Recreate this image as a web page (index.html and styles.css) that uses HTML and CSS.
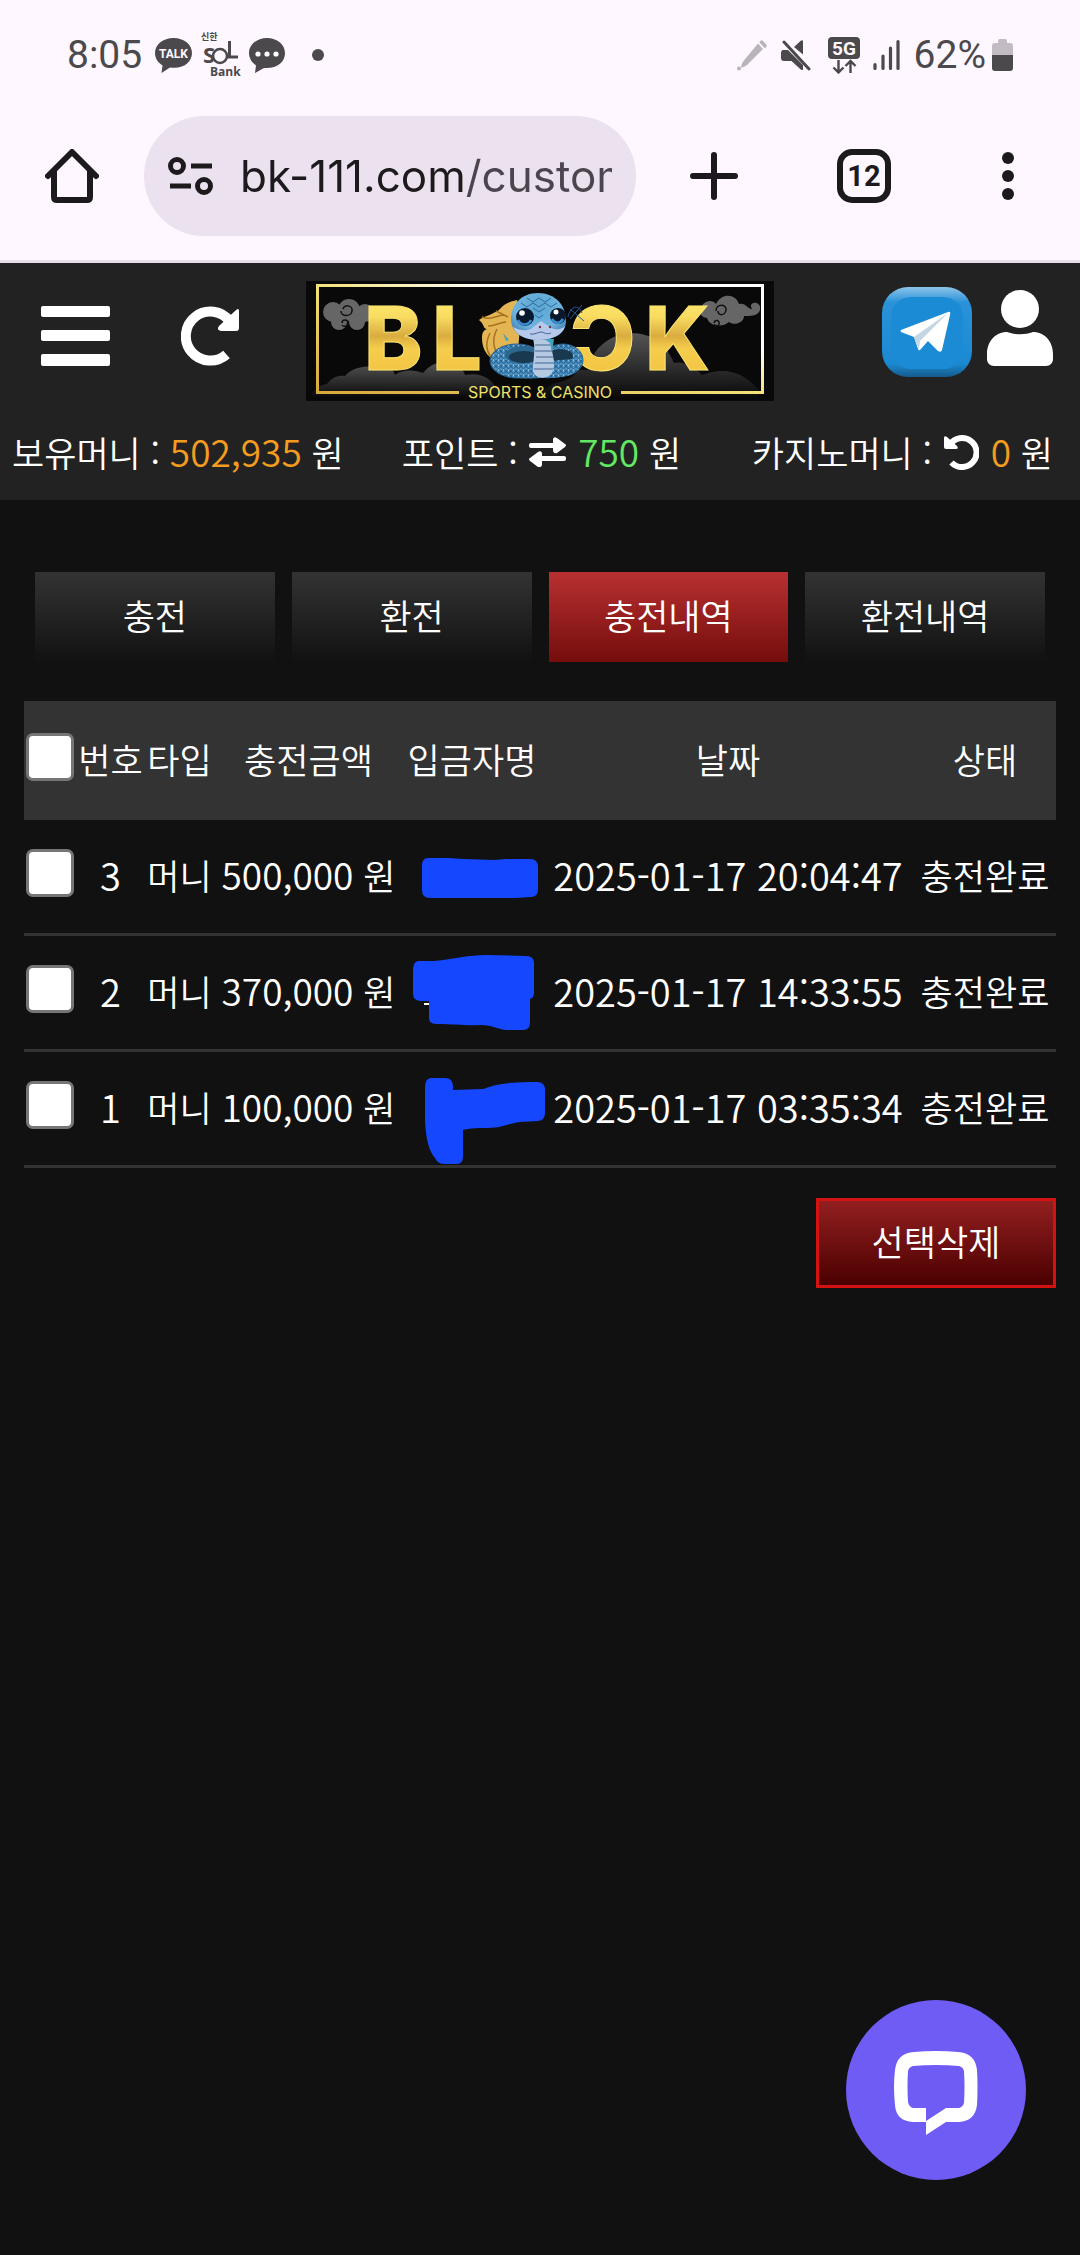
FILE: index.html
```html
<!DOCTYPE html>
<html lang="ko">
<head>
<meta charset="utf-8">
<meta name="viewport" content="width=device-width, initial-scale=1">
<title>충전내역</title>
<link rel="stylesheet" href="styles.css">
</head>
<body>
<div class="chrome">
  <div class="status">
    <div class="status-left">
      <span class="clock">8:05</span>
      <svg class="s-talk" width="37" height="36" viewBox="0 0 37 36"><path fill="#4b494c" d="M18.500 1C8 1 0 7.500 0 16c0 5.500 3 9.500 7.500 12.500L6.500 36l8.500-5.500c14 2 22-6 22-14.500C37 7.500 29 1 18.500 1z"/><text x="18.500" y="21" text-anchor="middle" class="talk-text">TALK</text></svg>
      <svg class="s-sol" width="40" height="50" viewBox="0 0 40 50" fill="#4b494c"><text x="0" y="10" class="sol-top">신한</text><text x="2" y="33" class="sol-s">S</text><circle cx="19" cy="26" r="7" fill="none" stroke="#4b494c" stroke-width="2.500"/><path d="M28.500 11v16H37" fill="none" stroke="#4b494c" stroke-width="3"/><text x="9" y="46" class="sol-bank">Bank</text></svg>
      <svg class="s-msg" width="36" height="36" viewBox="0 0 36 36"><path fill="#4b494c" d="M18 1C8 1 0 7.500 0 16c0 5.500 3 9.500 7 12.500L6 36l9-5c13 1 21-6 21-15C36 7.500 28 1 18 1z"/><g fill="#fff"><circle cx="9" cy="17" r="2.600"/><circle cx="18" cy="17" r="2.600"/><circle cx="27" cy="17" r="2.600"/></g></svg>
      <svg class="s-dot" width="12" height="12" viewBox="0 0 12 12"><circle cx="6" cy="6" r="6" fill="#4b494c"/></svg>
    </div>
    <div class="status-right">
      <svg width="30" height="32" viewBox="0 0 30 32" fill="#b9b3ba"><path d="M21 4.500l5 5.500L10 26c-2 1.800-4 2-6 2.500.3-2 .7-4 2.500-6.500zM23 2.500c1-1.500 2-1.500 3-.5l3 3c1 1 1 2 0 3.500L27.500 9 22.500 3.500z"/><circle cx="2" cy="29.500" r="2"/></svg>
      <svg class="s-mute" width="30" height="32" viewBox="0 0 30 32" fill="#4b494c"><path d="M2 11h5l15 15v5l-2-.2L10.500 22H3c-2 0-3-1-3-3v-5c0-2 1-3 2-3zM13 8l7-6.500h2v14z"/><path d="M3 3l25 27" stroke="#4b494c" stroke-width="3" stroke-linecap="round"/></svg>
      <svg class="s-5g" width="32" height="38" viewBox="0 0 32 38"><rect width="32" height="22" y="1" rx="4" fill="#4b494c"/><text x="16" y="19" text-anchor="middle" class="g5">5G</text><path d="M10.500 24v12M5.500 31.500l5 5 5-5M22.500 37V25M17.500 30l5-5 5 5" fill="none" stroke="#4b494c" stroke-width="2.400"/></svg>
      <svg class="s-sig" width="27" height="32" viewBox="0 0 27 32"><path d="M2 25.500v4M10 17v12.500M17.500 9v20.500M25 2.500v27" stroke="#4b494c" stroke-width="3.200" stroke-linecap="round"/></svg>
      <span class="clock s-bat-text">62%</span>
      <svg width="21" height="32" viewBox="0 0 21 32"><path d="M6 2q0-2 2-2h5q2 0 2 2v2h3q3 0 3 3v9H0V7q0-3 3-3h3z" fill="#c2bbc3"/><path d="M0 16h21v13q0 3-3 3H3q-3 0-3-3z" fill="#4b494c"/></svg>
    </div>
  </div>
  <div class="toolbar">
    <button class="tool home" aria-label="홈"><svg width="54" height="54" viewBox="0 0 54 54" fill="none" stroke="#1c1a1d" stroke-width="6" stroke-linejoin="round" stroke-linecap="round"><path d="M9 23v25q0 3 3 3h30q3 0 3-3V23"/><path d="M3 27L27 3l24 24"/></svg></button>
    <div class="omnibox">
      <svg width="46" height="40" viewBox="0 0 46 40" fill="none" stroke="#1c1a1d" stroke-width="5"><circle cx="9" cy="10" r="6.500"/><path d="M23 10h21M2 30h21"/><circle cx="36" cy="30" r="6.500"/></svg>
      <input class="url" type="text" value="bk-111.com/custom" aria-label="주소" readonly>
    </div>
    <button class="tool plus" aria-label="새 탭"><svg width="48" height="48" viewBox="0 0 48 48"><path d="M24 3v42M3 24h42" stroke="#1c1a1d" stroke-width="6" stroke-linecap="round"/></svg></button>
    <button class="tool" aria-label="탭 12개"><span class="tabcount">12</span></button>
    <button class="tool" aria-label="메뉴"><svg width="12" height="48" viewBox="0 0 12 48" fill="#1c1a1d"><circle cx="6" cy="6" r="6"/><circle cx="6" cy="24" r="6"/><circle cx="6" cy="42" r="6"/></svg></button>
  </div>
</div>

<header class="site-head">
  <div class="brand-row">
    <div class="head-left">
      <button class="icon-btn" aria-label="메뉴 열기"><svg width="69" height="60" viewBox="0 0 69 60" fill="#fff"><rect width="69" height="11" rx="2"/><rect y="24" width="69" height="11" rx="2"/><rect y="48" width="69" height="12" rx="2"/></svg></button>
      <button class="icon-btn" aria-label="새로고침"><svg width="59" height="60" viewBox="0 0 59 60"><path d="M45.500 48.500A24.500 24.500 0 1 1 49 15.500" fill="none" stroke="#fff" stroke-width="10"/><path d="M54 5q4-4 4 0v17q0 3-3 3H40q-5-1-2-5z" fill="#fff"/></svg></button>
    </div>
    <a class="logo" href="#" aria-label="BLOOK">
      <svg width="468" height="120" viewBox="0 0 468 120">
        <defs>
          <linearGradient id="gold" x1="0" y1="0" x2="0" y2="1"><stop offset="0" stop-color="#fff17a"/><stop offset=".3" stop-color="#f9dc60"/><stop offset=".48" stop-color="#d9ac3f"/><stop offset=".6" stop-color="#f5cd4c"/><stop offset="1" stop-color="#f2bd3e"/></linearGradient>
          <linearGradient id="frame" x1="0" y1="1" x2="1" y2="0"><stop offset="0" stop-color="#d9a83c"/><stop offset=".5" stop-color="#f4e27a"/><stop offset=".7" stop-color="#fff"/><stop offset="1" stop-color="#fff"/></linearGradient>
          <linearGradient id="hill" x1="0" y1="0" x2="0" y2="1"><stop offset="0" stop-color="#555"/><stop offset="1" stop-color="#0b0b0b"/></linearGradient>
          <radialGradient id="skin" cx=".5" cy=".3" r=".75"><stop offset="0" stop-color="#5ba6d3"/><stop offset=".6" stop-color="#6fb4de"/><stop offset="1" stop-color="#2b6fa3"/></radialGradient>
          <pattern id="scales" width="5" height="5" patternUnits="userSpaceOnUse"><rect width="5" height="5" fill="#4c94c6"/><path d="M0 0q2.500 5 5 0M-2.500 3q2.500 4 5 0M2.500 3q2.500 4 5 0" fill="none" stroke="#1f557f" stroke-width=".9"/><circle cx="2.500" cy="4" r=".8" fill="#b5def5"/></pattern>
        </defs>
        <rect width="468" height="120" fill="#090909"/>
        <path fill="url(#hill)" d="M4 116c5-9 10-12 17-13 6-8 13-9 18-8 6-8 22-12 32-8 10-5 16 0 18 7 8-6 20-5 28-2 8-10 20-14 28-8 8 0 12 4 14 10 14-3 26 2 32 14 6 6 8 6 10 8z"/>
        <path fill="url(#hill)" d="M230 116c8-8 14-12 20-14 8-2 14-4 18-8 4-5 6-6 14-5 2-18 20-36 42-37 24 0 36 12 44 30 5-1 12-1 16 6 8 0 10 4 12 6 26-10 44 0 56 14v8z"/>
        <g fill="#666"><circle cx="27" cy="31" r="10"/><circle cx="43" cy="29" r="11"/><circle cx="59" cy="32" r="9"/><circle cx="33" cy="41" r="8"/><circle cx="51" cy="41" r="8"/><path d="M395 29c0-8 10-12 15-6 6-12 20-10 23 0 6-2 9 5 13 5-5-8 10-9 8 1-2 7-12 6-16 6 0 7-10 10-15 6-7 6-20 4-22-4-8-1-6-6-6-8z"/></g>
        <path d="M37 28c1-5 10-4 9 2s-11 6-11 0M36 42c0-4 6-4 6 0s-5 4-6 2M410 30c0-8 11-7 10-1s-8 6-8 1M408 42c1-4 6-3 5 1s-5 2-4 0" fill="none" stroke="#111" stroke-width="1.500"/>
        <path d="M153 111.500H11.500V4.500h445v107H315" fill="none" stroke="url(#frame)" stroke-width="3"/>
        <g class="logo-word" fill="url(#gold)" stroke="#f9e471"><text x="58" y="89">B</text><text x="126" y="89">L</text><text x="264" y="89">Ɔ</text><text x="339" y="89">K</text></g>
        <path d="M173 39c4-3 14-6 20-10 6-7 10-8 18-10l4 12-3 40-16 10c-14-2-20-12-20-24 0-6 2-8 5-9-4 0-2-4-8-9z" fill="#e4b653"/>
        <path d="M184 52c-6 12-3 20 4 28M191 48c-5 10-4 20 3 28M176 36c10 4 14-2 22-2M182 45c8 0 12-4 18-4M190 30l12 6" stroke="#a67220" stroke-width="1.500" fill="none"/>
        <ellipse cx="211" cy="80" rx="27" ry="17" fill="url(#scales)" stroke="#255c88"/><ellipse cx="257" cy="79" rx="20" ry="16" fill="url(#scales)" stroke="#255c88"/>
        <ellipse cx="218" cy="74" rx="19" ry="9" fill="#2b668f"/><ellipse cx="218" cy="76" rx="15" ry="6" fill="#18394f"/><ellipse cx="254" cy="75" rx="13" ry="7" fill="#18394f"/>
        <path d="M185 78c14 12 34 4 47 2l12 0c14-2 26 0 32-6 4 20-20 24-40 23-26 2-50-2-51-19z" fill="url(#scales)"/>
        <path d="M225 52h20c-3 14 6 25 2 38-4 10-20 8-20-1 0-12 4-24-2-37z" fill="#b5c9e2"/><path d="M229 64h15M229 70h17M230 76h17M229 82h19M228 88h19" stroke="#6987ad" stroke-width="1.500"/>
        <path d="M200 60l-3-8 6 7zM238 58l6 4 2 10 2-14z" fill="#42a2bf"/>
        <path d="M232 12c17 0 28 12 28 28 0 13-12 19-28 19s-27-8-27-21c0-15 11-26 27-26z" fill="url(#skin)"/>
        <path d="M207 46c8 4 12 4 18 2l10-8 10 7c5 2 10 2 14-2-2 9-14 14-27 14-12 0-22-5-25-13z" fill="#b6c9ea"/>
        <path d="M221 17l6 4 6-4 6 4 6-4M215 22l6 4 6-4 6 4 6-4 6 4 6-4M227 27l6 4 6-4M229 34l4 3 4-3" stroke="#2c6e9c" fill="none"/>
        <g><circle cx="219" cy="36" r="9" fill="#0a1a2e"/><circle cx="252" cy="35" r="8" fill="#0a1a2e"/><path d="M212 39c3 6 10 6 13 0M246 38c3 5 8 5 11 0" stroke="#3a8dd0" stroke-width="2.500" fill="none"/><circle cx="216" cy="32" r="2.800" fill="#fff"/><circle cx="250" cy="31" r="2.500" fill="#fff"/></g>
        <path d="M224 53c5 1 8-2 11-2s5 3 10 1" stroke="#49648a" fill="none"/><g fill="#782e42"><circle cx="234" cy="46" r="1.200"/><circle cx="244" cy="46" r="1.200"/></g>
        <path d="M262 36c2-10 10-14 14-4M264 28l14 12M276 24l-12 14" stroke="#225b9c" fill="none"/>
        <text x="234" y="117" text-anchor="middle" class="logo-sub">SPORTS &amp; CASINO</text>
      </svg>
    </a>
    <div class="head-right">
      <a class="icon-btn" href="#" aria-label="텔레그램"><svg width="90" height="90" viewBox="0 0 90 90">
        <defs><linearGradient id="tg" x1="0" y1="0" x2="0" y2="1"><stop offset="0" stop-color="#8cc4ea"/><stop offset=".17" stop-color="#2a92d8"/><stop offset=".85" stop-color="#1b8ad3"/><stop offset="1" stop-color="#155b8b"/></linearGradient></defs>
        <rect width="90" height="90" rx="26" fill="url(#tg)"/><rect x="9" y="10" width="72" height="72" rx="20" fill="#1c8bd5"/><path d="M19 43L66 25q3-1 2 3l-8 35q-1 3-4 1L46 54l-8 9q-1 1-2-1l-4-12-13-5q-1-1 0-2z" fill="#fff"/><path d="M32 50l34-24-28 28-1 8-5-12z" fill="#c4d5e4"/></svg></a>
      <a class="icon-btn user" href="#" aria-label="내 정보"><svg width="66" height="76" viewBox="0 0 66 76" fill="#fff"><circle cx="33" cy="19" r="19"/><path d="M20 42c8 3 18 3 26 0 12 0 20 10 20 22v5c0 4-3 7-7 7H7c-4 0-7-3-7-7v-5c0-12 8-22 20-22z"/></svg></a>
    </div>
  </div>
  <div class="money-row">
    <div>보유머니 : <span class="num orange">502,935</span> 원</div>
    <div>포인트 : <svg class="swap" width="37" height="30" viewBox="0 0 37 30" fill="#fff"><path d="M2 6h22V2q1-3 4-1l8 6q2 1 0 3l-8 6q-3 1-4-2v-3H2q-2 0-2-2V8q0-2 2-2zM35 19H13v-3q-1-3-4-1l-8 6q-2 1 0 3l8 6q3 1 4-2v-4h22q2 0 2-2v-1q0-2-2-2z"/></svg> <span class="num green">750</span> 원</div>
    <div>카지노머니 : <svg class="undo" width="35" height="36" viewBox="0 0 35 36"><path d="M7.500 28.500A14.500 14.500 0 1 0 6 10.500" fill="none" stroke="#fff" stroke-width="6"/><path d="M0 4q0-3 3-1l10 9q2 3-1 3H2q-2 0-2-2z" fill="#fff"/></svg> <span class="num orange">0</span> 원</div>
  </div>
</header>

<main class="content">
  <nav class="tabs">
    <a class="tab" href="#">충전</a>
    <a class="tab" href="#">환전</a>
    <a class="tab active" href="#" aria-current="page">충전내역</a>
    <a class="tab" href="#">환전내역</a>
  </nav>
  <table class="history">
    <colgroup><col class="c-check"><col class="c-no"><col class="c-type"><col class="c-amount"><col class="c-name"><col><col class="c-state"></colgroup>
    <thead>
      <tr><th><input type="checkbox" aria-label="전체 선택"></th><th>번호</th><th>타입</th><th>충전금액</th><th>입금자명</th><th>날짜</th><th>상태</th></tr>
    </thead>
    <tbody>
      <tr><td><input type="checkbox" aria-label="3번 선택"></td><td class="date">3</td><td>머니</td><td><span class="num">500,000</span> 원</td>
        <td class="name"><svg width="140" height="113" viewBox="0 0 140 113"><path fill="#1547ff" d="M26 38l20 0 16 1 30 1 12-1h24q8 0 8 8v22q0 8-7 8l-15 1-50 0H28q-8 0-8-8V46q0-8 6-8z"/></svg></td>
        <td class="date">2025-01-17 20:04:47</td><td>충전완료</td></tr>
      <tr><td><input type="checkbox" aria-label="2번 선택"></td><td class="date">2</td><td>머니</td><td><span class="num">370,000</span> 원</td>
        <td class="name"><svg width="140" height="113" viewBox="0 0 140 113"><path fill="#fff" d="M22 67h6v2h-6z"/><path fill="#1547ff" d="M16 25h16c20-2 35-6 52-6l40 1q8 0 8 7v30q0 5-4 6v23q0 8-7 8h-17c-9-1-14-5-25-5-15 1-25-1-44-1q-8 0-8-6V65h-8q-8 0-8-8V34q0-8 5-9z"/></svg></td>
        <td class="date">2025-01-17 14:33:55</td><td>충전완료</td></tr>
      <tr><td><input type="checkbox" aria-label="1번 선택"></td><td class="date">1</td><td>머니</td><td><span class="num">100,000</span> 원</td>
        <td class="name"><svg width="140" height="113" viewBox="0 0 140 113"><path fill="#1547ff" d="M29 26h14q8 0 8 9v3l30-1c14-5 24-7 54-7q8 0 8 8v23q0 7-7 8l-18 1c-14 2-18 6-32 6-10 0-16 0-25 2v26q0 8-6 8H42q-6 0-9-6-9-10-10-38V36q0-10 6-10z"/></svg></td>
        <td class="date">2025-01-17 03:35:34</td><td>충전완료</td></tr>
    </tbody>
  </table>
  <div class="actions"><button class="delete">선택삭제</button></div>
</main>

<button class="chat" aria-label="채팅 상담"><svg width="84" height="84" viewBox="0 0 84 84"><path fill="#fff" fill-rule="evenodd" d="M20 1Q42-1 64 1 81 2 83 19q1 17 0 35-2 16-18 17H52L32 84V71H19Q2 70 1 54 -1 36 1 19 3 2 20 1zM19 15q-4 1-5 5-1 15 0 31 1 5 5 6h13v13l20-13h13q4-1 5-5 1-16 0-32-1-4-5-5-23-2-46 0z"/></svg></button>
</body>
</html>
```
FILE: styles.css
```css
* { box-sizing: border-box; }
body {
  margin: 0;
  min-height: 100vh;
  background: #111;
  color: #fff;
  font: 350 35px/48px "Noto Sans CJK KR", sans-serif;
}
button { padding: 0; border: 0; background: none; font: inherit; color: inherit; }
a { color: inherit; text-decoration: none; }
svg { display: block; flex: none; }

/* Browser chrome */
.chrome { background: #fef7ff; color: #4b494c; border-bottom: 3px solid #e8dfea; }
.status { display: flex; justify-content: space-between; height: 110px; padding: 0 67px; }
.status-left, .status-right { display: flex; align-items: center; }
.clock { font: 400 39px/48px Roboto, sans-serif; }
.s-talk { margin-left: 13px; }
.s-sol { margin-left: 9px; }
.s-msg { margin-left: 8px; }
.s-dot { margin-left: 27px; }
.s-mute { margin-left: 14px; }
.s-5g { margin-left: 17px; }
.s-sig { margin-left: 13px; }
.s-bat-text { margin: 0 6px 0 14px; }
.talk-text { font: 700 12px Roboto, sans-serif; fill: #fef7ff; }
.sol-top { font: 700 9px "Noto Sans CJK KR", sans-serif; }
.sol-s { font: 700 22px "Open Sans", sans-serif; }
.sol-bank { font: 700 12px "Open Sans", sans-serif; }
.g5 { font: 700 19px Roboto, sans-serif; fill: #fef7ff; }
.toolbar { display: flex; align-items: center; padding: 6px 0 24px; color: #1c1a1d; }
.tool { display: flex; flex: none; align-items: center; justify-content: center; width: 144px; height: 120px; }
.tool.plus { width: 156px; }
.omnibox { display: flex; flex: 1; align-items: center; gap: 26px; min-width: 0; height: 120px; padding: 0 24px; border-radius: 60px; background: #ece2ef; }
.url {
  flex: 1; min-width: 0; padding: 0; border: 0; outline: 0;
  font: 400 44px/64px Inter, sans-serif;
  color: transparent;
  background: linear-gradient(90deg, #1c1a1d 225px, #4b454d 225px);
  -webkit-background-clip: text;
  background-clip: text;
}
.tabcount { width: 54px; height: 54px; border: 6px solid #1c1a1d; border-radius: 15px; font: 700 29px/43px Roboto, sans-serif; text-align: center; }

/* Site header */
.site-head { background: #222; padding-top: 18px; }
.brand-row { display: grid; grid-template-columns: 1fr auto 1fr; }
.head-left { display: flex; align-items: center; gap: 71px; padding: 0 0 10px 41px; }
.head-right { display: flex; align-items: center; justify-content: flex-end; gap: 15px; padding: 0 27px 18px 0; }
.user { padding-bottom: 8px; }
.logo-word { font: 800 88px Inter, sans-serif; }
.logo-sub { font: 400 16px Inter, sans-serif; fill: #eee06c; }
.money-row { display: flex; gap: 58px; height: 99px; padding: 26px 27px 0 12px; white-space: nowrap; }
.money-row > :last-child { margin-left: auto; }
.num { font-size: 37px; }
.date { font-size: 38px; }
.orange { color: #f39c1f; }
.green { color: #62e862; }
.swap, .undo { display: inline-block; margin: 0 2px; }
.undo { vertical-align: -3px; }

/* Page body */
.content { padding: 72px 24px; }
.tabs { display: grid; grid-template-columns: repeat(4, 1fr); gap: 17px; padding: 0 11px; }
.tab { height: 90px; background: linear-gradient(#333, #111); line-height: 86px; text-align: center; }
.tab.active { background: linear-gradient(#b83030, #750d0d); }
.history { width: 100%; margin-top: 39px; border-collapse: separate; border-spacing: 0; table-layout: fixed; text-align: center; white-space: nowrap; }
.history th { height: 119px; padding: 0 0 4px; background: #333; font-weight: inherit; }
.history td { height: 116px; padding: 0 0 4px; border-bottom: 3px solid #333; }
.history .name { padding: 0; }
.name svg { overflow: visible; }
.c-check { width: 53px; }
.c-no { width: 67px; }
.c-type { width: 71px; }
.c-amount { width: 187px; }
.c-name { width: 140px; }
.c-state { width: 142px; }
.history input {
  display: block; width: 48px; height: 48px; margin: 0 2px 4px;
  appearance: none; border: 3px solid #767676; border-radius: 7px; background: #fff;
}
.actions { display: flex; justify-content: flex-end; margin-top: 30px; }
.delete { width: 240px; height: 90px; padding-bottom: 4px; border: 3px solid #d31212; background: linear-gradient(#921f20, #4b0000); }
.chat {
  position: fixed; right: 54px; bottom: 75px;
  display: flex; align-items: center; justify-content: center;
  width: 180px; height: 180px; border-radius: 50%; background: #6f5cf5;
  padding-top: 6px;
}
```
